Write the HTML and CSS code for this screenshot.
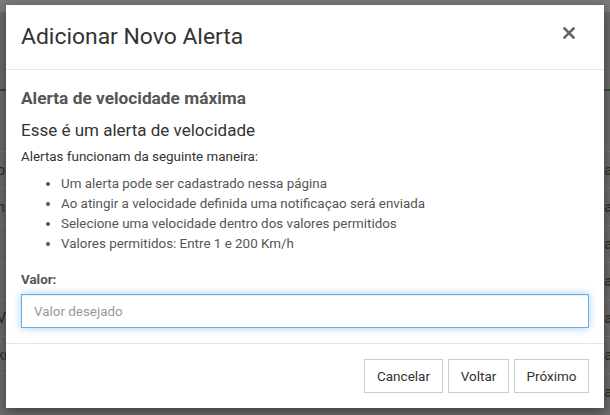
FILE: index.html
```html
<!DOCTYPE html>
<html lang="pt-BR">
<head>
  <meta charset="UTF-8"/>
  <meta name="viewport" content="width=device-width, initial-scale=1.0"/>
  <title>Adicionar Novo Alerta</title>
  <link rel="stylesheet" href="styles.css">
</head>
<body>

<div class="page">
  <div class="topbar"></div>
  <div class="navline"></div>
  <div class="rows">
    <div class="row"><span>or</span><span>a</span></div>
    <div class="row"><span>n</span><span>a</span></div>
    <div class="row"><span></span><span>a</span></div>
    <div class="row"><span></span><span>a</span></div>
    <div class="row"><span>Va</span><span>a</span></div>
    <div class="row"><span>kr</span><span>a</span></div>
    <div class="row"><span></span><span>a</span></div>
  </div>
</div>

<div class="modal">
  <div class="modal-header">
    <h4 class="modal-title">Adicionar Novo Alerta</h4>
    <button class="close" aria-label="Fechar">
      <svg width="12" height="12" viewBox="0 0 12 12">
        <path d="M1.5 1.5 L10.5 10.5 M10.5 1.5 L1.5 10.5" stroke="currentColor" stroke-width="2.6" stroke-linecap="square"/>
      </svg>
    </button>
  </div>

  <div class="modal-body">
    <h4 class="alert-type">Alerta de velocidade máxima</h4>
    <h4 class="alert-desc">Esse é um alerta de velocidade</h4>
    <p class="intro">Alertas funcionam da seguinte maneira:</p>
    <ul class="rules">
      <li>Um alerta pode ser cadastrado nessa página</li>
      <li>Ao atingir a velocidade definida uma notificaçao será enviada</li>
      <li>Selecione uma velocidade dentro dos valores permitidos</li>
      <li>Valores permitidos: Entre 1 e 200 Km/h</li>
    </ul>
    <label class="field-label" for="valor">Valor:</label>
    <input id="valor" class="form-control" placeholder="Valor desejado" autofocus/>
  </div>

  <div class="modal-footer">
    <button class="btn btn-cancel">Cancelar</button>
    <button class="btn btn-back">Voltar</button>
    <button class="btn btn-next">Próximo</button>
  </div>
</div>

</body>
</html>
```

FILE: styles.css
```css
body {
  font-family: Roboto, sans-serif;
  margin: 0;
  padding: 0;
  background: #6b6b6b;
  color: #333;
  height: 415px;
  overflow: hidden;
}
.page {
  color: #2a2a2a;
  font-size: 14px;
}
.topbar {
  height: 12px;
  background: #7b7b7b;
}
.navline {
  margin-top: 77px;
  height: 2px;
  background: #1f5a24;
}
.rows {
  margin-top: 60px;
}
.row {
  display: flex;
  justify-content: space-between;
  align-items: center;
  height: 36px;
  border-top: 1px solid #767676;
  margin-left: -3px;
  margin-right: -2px;
}
.modal {
  position: absolute;
  left: 6px;
  top: 5px;
  width: 598px;
  background: #fff;
  box-shadow: 0 3px 12px rgba(0, 0, 0, 0.45);
}
.modal-header {
  display: flex;
  justify-content: space-between;
  align-items: flex-start;
  padding: 15px;
  border-bottom: 1px solid #e5e5e5;
}
.modal-title {
  margin: 0;
  font-size: 22.9px;
  font-weight: normal;
  line-height: 34px;
  color: #333;
}
.close {
  background: none;
  border: none;
  padding: 0;
  margin: 7px 14px 0 0;
  color: #666;
  display: flex;
  cursor: pointer;
}
.modal-body {
  padding: 15px;
}
.alert-type {
  margin: 0;
  font-size: 17.3px;
  font-weight: bold;
  line-height: 26px;
  color: #555;
}
.alert-desc {
  margin: 6px 0 0;
  font-size: 17px;
  font-weight: normal;
  line-height: 26px;
  color: #333;
}
.intro {
  margin: 4px 0 0;
  font-size: 13.4px;
  line-height: 20px;
}
.rules {
  margin: 7px 0 0;
  padding-left: 40px;
  font-size: 13.4px;
  line-height: 20px;
  color: #555;
}
.field-label {
  display: block;
  margin-top: 16px;
  font-size: 13.4px;
  line-height: 20px;
  font-weight: bold;
  color: #555;
}
.form-control {
  display: block;
  width: 100%;
  box-sizing: border-box;
  margin-top: 4px;
  height: 34px;
  padding: 6px 12px;
  font-family: inherit;
  font-size: 13.4px;
  color: #555;
  border: 1px solid #66afe9;
  outline: none;
  box-shadow: inset 0 1px 1px rgba(0, 0, 0, 0.075), 0 0 8px rgba(102, 175, 233, 0.6);
}
.form-control::placeholder {
  color: #999;
}
.modal-footer {
  display: flex;
  justify-content: flex-end;
  gap: 5px;
  padding: 15px;
  border-top: 1px solid #e5e5e5;
}
.btn {
  height: 34px;
  padding: 6px 0;
  font-family: inherit;
  font-size: 13.5px;
  color: #333;
  background: #fff;
  border: 1px solid #ccc;
  cursor: pointer;
}
.btn-cancel {
  width: 79px;
}
.btn-back {
  width: 61px;
}
.btn-next {
  width: 75px;
}
.btn:hover {
  background: #e6e6e6;
}
```
